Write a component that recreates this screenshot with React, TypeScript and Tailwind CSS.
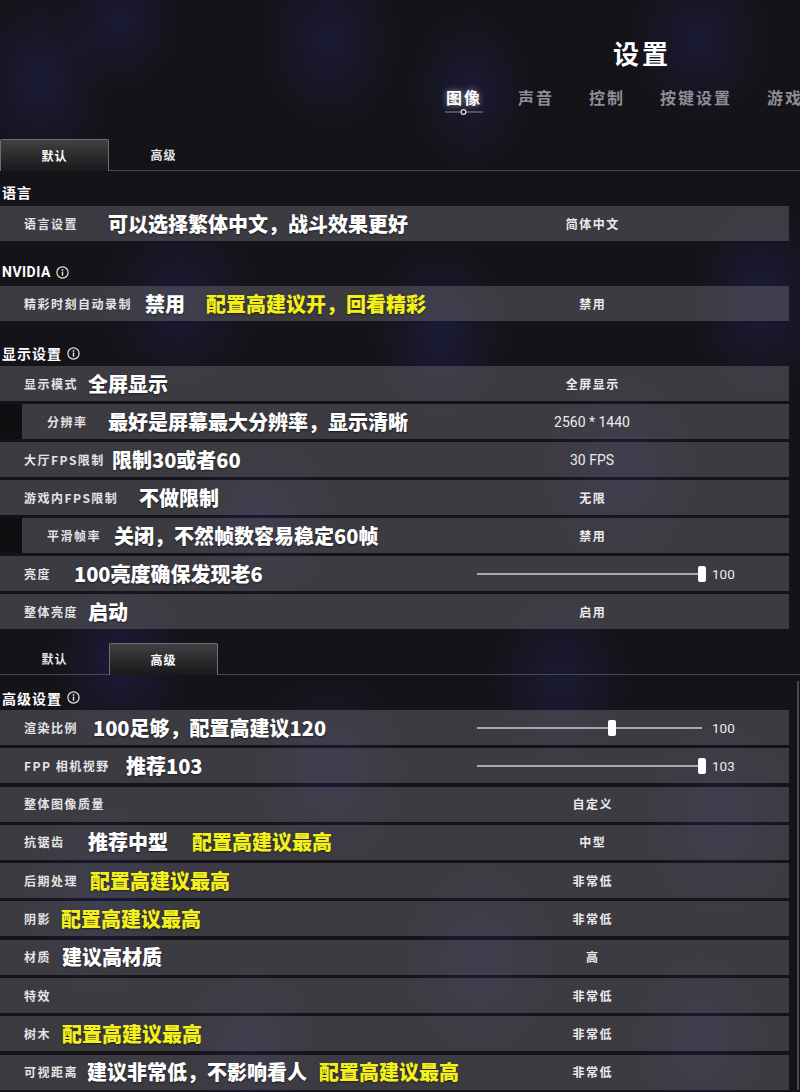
import React from "react";

type Annot = { t: string; y?: boolean; ml?: string };
type RowD = {
  label: string;
  lw?: string;
  a?: Annot[];
  value: string;
  num?: boolean;
  slider?: number;
  indent?: boolean;
};

function Info() {
  return (
    <svg width="13" height="13" viewBox="0 0 13 13" className="shrink-0">
      <circle cx="6.5" cy="6.5" r="5.6" fill="none" stroke="#e6e6e6" strokeWidth="1.2" />
      <circle cx="6.5" cy="3.9" r="0.9" fill="#e6e6e6" />
      <rect x="5.8" y="5.5" width="1.4" height="4.2" fill="#e6e6e6" />
    </svg>
  );
}

function Heading({ text, info, pad }: { text: string; info?: boolean; pad: string }) {
  return (
    <div className={"flex items-center gap-[5px] pl-[2px] " + pad}>
      <span className="text-[14px] font-bold leading-[20px] tracking-[1px] text-white">{text}</span>
      {info && <Info />}
    </div>
  );
}

function Row({ r }: { r: RowD }) {
  return (
    <div className="flex h-[35px] w-[789px] shrink-0">
      {r.indent && <div className="w-[22px] shrink-0 bg-[#0f0f12]" />}
      <div className="flex h-full flex-1 items-center bg-[rgba(100,100,106,0.5)]">
        <div
          className={
            "flex shrink-0 items-center whitespace-nowrap " +
            (r.indent ? "w-[373px]" : "w-[395px]")
          }
        >
          <div
            className={
              "shrink-0 text-[12px] font-bold leading-[16px] tracking-[1.5px] text-[#e4e4e4] " +
              (r.indent ? "pl-[25px] " : "pl-[24px] ") +
              (r.lw ?? "")
            }
          >
            {r.label}
          </div>
          {r.a?.map((a, i) => (
            <span
              key={i}
              className={
                "shrink-0 text-[20px] font-black leading-[24px] [text-shadow:0_1px_2px_rgba(0,0,0,0.5)] " +
                (a.y ? "text-[#f4f01c] " : "text-white ") +
                (a.ml ?? "")
              }
            >
              {a.t}
            </span>
          ))}
        </div>
        {r.slider !== undefined ? (
          <div className="flex flex-1 items-center">
            <div className="relative ml-[82px] h-[2px] w-[225px] bg-[#a9a9ab]">
              <div
                className="absolute top-[-7px] h-[16px] w-[8px] rounded-[2px] bg-white"
                style={{ left: r.slider * 225 - 4 }}
              />
            </div>
            <span className="ml-[10px] text-[13.5px] leading-[16px] text-[#ececec] [font-family:Roboto,Noto_Sans_CJK_SC,sans-serif]">
              {r.value}
            </span>
          </div>
        ) : (
          <div className="flex flex-1 items-center justify-center">
            {r.num ? (
              <span className="text-[14px] leading-[16px] text-[#ececec] [font-family:Roboto,Noto_Sans_CJK_SC,sans-serif]">
                {r.value}
              </span>
            ) : (
              <span className="pl-[1.5px] text-[12px] font-bold leading-[16px] tracking-[1.5px] text-[#ececec]">
                {r.value}
              </span>
            )}
          </div>
        )}
      </div>
    </div>
  );
}

function Tabs({ active }: { active: 0 | 1 }) {
  const tab = (label: string, on: boolean) =>
    on ? (
      <div className="flex h-full w-[109px] shrink-0 items-center justify-center rounded-t-[2px] border border-b-0 border-[#6e6e70] bg-linear-to-b from-[#414143] to-[#19191c] text-[12px] font-bold tracking-[1px] text-white">
        {label}
      </div>
    ) : (
      <div className="flex h-full w-[109px] shrink-0 items-center justify-center border-b border-[#4a4a4c] text-[12px] font-bold tracking-[1px] text-[#e6e6e6]">
        {label}
      </div>
    );
  return (
    <div className="flex h-[32px] w-[800px]">
      {tab("默认", active === 0)}
      {tab("高级", active === 1)}
      <div className="flex-1 border-b border-[#4a4a4c]" />
    </div>
  );
}

const displayRows: RowD[] = [
  { label: "显示模式", lw: "w-[88px]", a: [{ t: "全屏显示" }], value: "全屏显示" },
  { label: "分辨率", lw: "w-[86px]", a: [{ t: "最好是屏幕最大分辨率，显示清晰" }], value: "2560 * 1440", num: true, indent: true },
  { label: "大厅FPS限制", lw: "w-[112px]", a: [{ t: "限制30或者60" }], value: "30 FPS", num: true },
  { label: "游戏内FPS限制", lw: "w-[139px]", a: [{ t: "不做限制" }], value: "无限" },
  { label: "平滑帧率", lw: "w-[92px]", a: [{ t: "关闭，不然帧数容易稳定60帧" }], value: "禁用", indent: true },
  { label: "亮度", lw: "w-[74px]", a: [{ t: "100亮度确保发现老6" }], value: "100", slider: 1 },
  { label: "整体亮度", lw: "w-[88px]", a: [{ t: "启动" }], value: "启用" },
];

const advRows: RowD[] = [
  { label: "渲染比例", lw: "w-[93px]", a: [{ t: "100足够，配置高建议120" }], value: "100", slider: 0.6 },
  { label: "FPP 相机视野", lw: "w-[126px]", a: [{ t: "推荐103" }], value: "103", slider: 1 },
  { label: "整体图像质量", value: "自定义" },
  { label: "抗锯齿", lw: "w-[88px]", a: [{ t: "推荐中型" }, { t: "配置高建议最高", y: true, ml: "ml-[24px]" }], value: "中型" },
  { label: "后期处理", lw: "w-[90px]", a: [{ t: "配置高建议最高", y: true }], value: "非常低" },
  { label: "阴影", lw: "w-[61px]", a: [{ t: "配置高建议最高", y: true }], value: "非常低" },
  { label: "材质", lw: "w-[62px]", a: [{ t: "建议高材质" }], value: "高" },
  { label: "特效", value: "非常低" },
  { label: "树木", lw: "w-[62px]", a: [{ t: "配置高建议最高", y: true }], value: "非常低" },
  { label: "可视距离", lw: "w-[87px]", a: [{ t: "建议非常低，不影响看人" }, { t: "配置高建议最高", y: true, ml: "ml-[12px]" }], value: "非常低" },
];

export default function App() {
  return (
    <div className="h-[1092px] w-[800px] overflow-hidden bg-[#141318] bg-[radial-gradient(ellipse_70px_90px_at_40px_80px,rgba(48,46,140,0.28),transparent),radial-gradient(ellipse_60px_70px_at_120px_20px,rgba(48,46,140,0.25),transparent),radial-gradient(ellipse_70px_90px_at_330px_40px,rgba(48,46,140,0.25),transparent),radial-gradient(ellipse_60px_80px_at_470px_90px,rgba(48,46,140,0.25),transparent),radial-gradient(ellipse_70px_80px_at_700px_40px,rgba(48,46,140,0.25),transparent),radial-gradient(ellipse_70px_100px_at_760px_300px,rgba(48,46,140,0.28),transparent),radial-gradient(ellipse_80px_90px_at_180px_300px,rgba(48,46,140,0.25),transparent),radial-gradient(ellipse_70px_90px_at_440px_330px,rgba(48,46,140,0.28),transparent),radial-gradient(ellipse_80px_100px_at_620px_470px,rgba(48,46,140,0.25),transparent),radial-gradient(ellipse_80px_90px_at_260px_520px,rgba(48,46,140,0.25),transparent),radial-gradient(ellipse_70px_90px_at_120px_660px,rgba(48,46,140,0.28),transparent),radial-gradient(ellipse_70px_90px_at_560px_680px,rgba(48,46,140,0.25),transparent),radial-gradient(ellipse_80px_100px_at_330px_770px,rgba(48,46,140,0.25),transparent),radial-gradient(ellipse_80px_100px_at_720px_820px,rgba(48,46,140,0.25),transparent),radial-gradient(ellipse_80px_100px_at_100px_900px,rgba(48,46,140,0.25),transparent),radial-gradient(ellipse_80px_100px_at_480px_960px,rgba(48,46,140,0.25),transparent),radial-gradient(ellipse_70px_90px_at_250px_1050px,rgba(48,46,140,0.25),transparent),radial-gradient(ellipse_70px_90px_at_700px_1040px,rgba(48,46,140,0.25),transparent)] text-white [font-family:Noto_Sans_CJK_SC,sans-serif]">
      {/* header */}
      <div className="h-[139px] pt-[36px]">
        <div className="ml-[613px] text-[26px] font-bold leading-[34px] tracking-[3px] text-white">设置</div>
        <div className="ml-[446px] mt-[16px] flex items-start gap-[35px] whitespace-nowrap text-[16px] font-bold leading-[22px] tracking-[2px]">
          <div className="flex shrink-0 flex-col items-start">
            <span className="text-white [text-shadow:0_0_6px_rgba(255,255,255,0.55)]">图像</span>
            <svg width="38" height="8" viewBox="0 0 38 8" className="ml-[-1px]">
              <line x1="0" y1="4" x2="38" y2="4" stroke="#8c8c90" strokeWidth="1" />
              <circle cx="18.5" cy="4" r="2.4" fill="#1a1a1e" stroke="#e0e0e0" strokeWidth="1.2" />
            </svg>
          </div>
          <span className="shrink-0 text-[#8e8e96]">声音</span>
          <span className="shrink-0 text-[#8e8e96]">控制</span>
          <span className="shrink-0 text-[#8e8e96]">按键设置</span>
          <span className="shrink-0 text-[#8e8e96]">游戏</span>
        </div>
      </div>

      <Tabs active={0} />

      <div className="flex flex-col">
        <Heading text="语言" pad="h-[35px] pt-[7px]" />
        <Row r={{ label: "语言设置", lw: "w-[108px]", a: [{ t: "可以选择繁体中文，战斗效果更好" }], value: "简体中文" }} />
        <div className="flex h-[45px] items-center pt-[17px] pl-[2px]">
          <span className="text-[14px] font-bold leading-[20px] tracking-[0.5px] text-white [font-family:Roboto,Noto_Sans_CJK_SC,sans-serif]">NVIDIA</span>
          <span className="ml-[5px]"><Info /></span>
        </div>
        <Row r={{ label: "精彩时刻自动录制", lw: "w-[145px]", a: [{ t: "禁用" }, { t: "配置高建议开，回看精彩", y: true, ml: "ml-[21px]" }], value: "禁用" }} />
        <Heading text="显示设置" info pad="h-[45px] pt-[19px]" />
        <div className="flex flex-col gap-[3px]">
          {displayRows.map((r, i) => (
            <Row key={i} r={r} />
          ))}
        </div>
      </div>

      <div className="mt-[14px]">
        <Tabs active={1} />
      </div>

      <div className="flex">
        <div className="flex w-[789px] flex-col">
          <Heading text="高级设置" info pad="h-[35px] pt-[10px]" />
          <div className="flex flex-col gap-[3.3px]">
            {advRows.map((r, i) => (
              <Row key={i} r={r} />
            ))}
          </div>
        </div>
        <div className="flex-1" />
        <div className="mr-[1px] mt-[6px] w-[2px] bg-[#4a4a4e]" />
      </div>
    </div>
  );
}
